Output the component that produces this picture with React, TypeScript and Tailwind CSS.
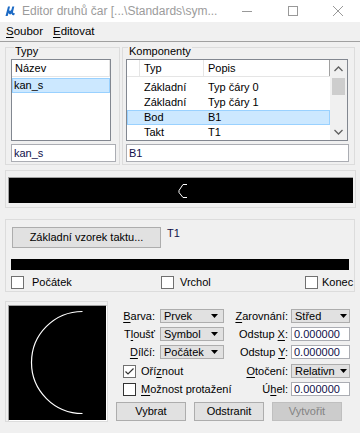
import React from 'react';

const U = ({ children }: { children: React.ReactNode }) => (
  <span className="underline underline-offset-[2px] decoration-1">{children}</span>
);

interface GroupProps {
  label?: string;
  labelClass?: string;
  className?: string;
  children?: React.ReactNode;
}

function GroupBox({ label, labelClass = '', className = '', children }: GroupProps) {
  return (
    <div className={`relative border border-[#dcdcdc] ${className}`}>
      {label && (
        <span className={`absolute -top-[3px] bg-[#f0f0f0] px-[1px] leading-[13px] ${labelClass}`}>
          {label}
        </span>
      )}
      {children}
    </div>
  );
}

function CheckBox({ checked = false, dark = false }: { checked?: boolean; dark?: boolean }) {
  return (
    <span
      className={`w-[13px] h-[13px] shrink-0 bg-white border flex items-center justify-center ${
        dark ? 'border-[#333333]' : 'border-[#707070]'
      }`}
    >
      {checked && (
        <svg width="11" height="11" viewBox="0 0 11 11">
          <path d="M1.5 5.5 L4 8 L9.5 2.5" fill="none" stroke="#333333" strokeWidth="1.2" />
        </svg>
      )}
    </span>
  );
}

const Arrow = () => (
  <svg width="7" height="4" viewBox="0 0 7 4" className="shrink-0">
    <path d="M0 0 H7 L3.5 4 Z" fill="#000" />
  </svg>
);

function Combo({ value, wide }: { value: string; wide?: boolean }) {
  return (
    <div
      className={`h-[14px] border border-[#adadad] bg-[#e1e1e1] flex items-center pl-[3px] leading-[12px] ${
        wide ? 'w-[64px] pr-[5px]' : 'w-[59px] pr-[2px]'
      }`}
    >
      <span className="flex-1 min-w-0 overflow-hidden whitespace-nowrap">{value}</span>
      <span className="ml-[3px] shrink-0">
        <Arrow />
      </span>
    </div>
  );
}

const Field = ({ value }: { value: string }) => (
  <div className="w-[59px] h-[14px] border border-[#abadb3] bg-white pl-[2px] leading-[12px] text-[#10104a]">
    {value}
  </div>
);

function Btn({ children, disabled }: { children: React.ReactNode; disabled?: boolean }) {
  return (
    <div
      className={`w-[70px] h-[19px] border flex items-center justify-center ${
        disabled ? 'bg-[#cccccc] border-[#bfbfbf] text-[#838383]' : 'bg-[#e1e1e1] border-[#adadad]'
      }`}
    >
      {children}
    </div>
  );
}

const components = [
  ['Základní', 'Typ čáry 0'],
  ['Základní', 'Typ čáry 1'],
  ['Bod', 'B1'],
  ['Takt', 'T1'],
];

export default function App() {
  return (
    <div className="w-[360px] h-[433px] overflow-hidden bg-[#f0f0f0] text-black text-[11px] leading-[13px] font-['Liberation_Sans',Arial,sans-serif]">
      {/* title bar */}
      <div className="h-[22px] bg-white flex items-center">
        <svg width="11" height="10" viewBox="0 0 11 10" className="ml-[5px] shrink-0">
          <path
            d="M0.5 10 L3 0.5 L5 0.5 L4.2 4 Q5 6 6.5 3.5 L7.3 0.5 L9.3 0.5 L8 6 Q7.8 7.5 9.8 7 L9.3 9 Q6.8 9.8 6.6 7.6 Q4.6 9.6 3.5 7 L2.7 10 Z"
            fill="#1d6bc5"
          />
        </svg>
        <span className="ml-[6px] text-[12px] text-[#9b9b9b] whitespace-nowrap">
          Editor druhů čar [...\Standards\sym...
        </span>
        <div className="ml-auto flex h-full">
          <div className="w-[46px] flex items-center justify-center">
            <div className="w-[10px] h-[1px] bg-[#999999]" />
          </div>
          <div className="w-[45px] flex items-center justify-center">
            <div className="w-[10px] h-[10px] border border-[#999999]" />
          </div>
          <div className="w-[45px] flex items-center justify-center">
            <svg width="10" height="10" viewBox="0 0 10 10">
              <path d="M0 0 L10 10 M10 0 L0 10" stroke="#999999" strokeWidth="1" />
            </svg>
          </div>
        </div>
      </div>

      {/* menu */}
      <div className="h-[20px] border-b border-[#a0a0a0] flex items-center text-[11.5px]">
        <span className="ml-[6px] w-[47px]">
          <U>S</U>oubor
        </span>
        <span>
          <U>E</U>ditovat
        </span>
      </div>

      {/* lists */}
      <div className="flex mt-[5px] ml-[5px] gap-[2px]">
        <GroupBox label="Typy" labelClass="left-[8px]" className="w-[115px] h-[118px] pt-[11px] pl-[5px]">
          <div className="w-[100px] h-[82px] border border-[#828790] bg-white">
            <div className="h-[17px] border-b border-r border-[#e5e5e5] flex items-center pl-[3px]">Název</div>
            <div className="mt-[1px] h-[15px] w-[98px] bg-[#cce8ff] border border-[#99d1ff] flex items-center pl-[1px]">
              kan_s
            </div>
          </div>
          <div className="mt-[3px] w-[105px] h-[18px] border border-[#abadb3] bg-white flex items-center pl-[2px] text-[#10104a]">
            kan_s
          </div>
        </GroupBox>

        <GroupBox label="Komponenty" labelClass="left-[5px]" className="w-[233px] h-[118px] pt-[11px] pl-[3px]">
          <div className="w-[222px] h-[82px] border border-[#828790] bg-white flex">
            <div className="w-[203px]">
              <div className="h-[17px] border-b border-[#e5e5e5] flex">
                <div className="w-[13px] border-r border-[#e5e5e5]" />
                <div className="w-[64px] border-r border-[#e5e5e5] flex items-center pl-[4px]">Typ</div>
                <div className="w-[126px] border-r border-[#a0a0a0] flex items-center pl-[4px]">Popis</div>
              </div>
              <div className="mt-[3px]">
                {components.map(([typ, popis], i) => (
                  <div
                    key={i}
                    className={`h-[15px] flex items-center border ${
                      i === 2 ? 'bg-[#cce8ff] border-[#99d1ff]' : 'border-transparent'
                    }`}
                  >
                    <span className="ml-[12px] w-[64px] pl-[4px]">{typ}</span>
                    <span className="pl-[4px]">{popis}</span>
                  </div>
                ))}
              </div>
            </div>
            <div className="w-[17px] ml-auto bg-[#f0f0f0] flex flex-col items-center">
              <div className="h-[17px] w-full flex items-center justify-center">
                <svg width="9" height="6" viewBox="0 0 9 6">
                  <path d="M0.5 5 L4.5 1 L8.5 5" fill="none" stroke="#606060" strokeWidth="1.3" />
                </svg>
              </div>
              <div className="mt-[1px] w-[13px] h-[17px] bg-[#cdcdcd]" />
              <div className="mt-auto h-[17px] w-full flex items-center justify-center">
                <svg width="9" height="6" viewBox="0 0 9 6">
                  <path d="M0.5 1 L4.5 5 L8.5 1" fill="none" stroke="#606060" strokeWidth="1.3" />
                </svg>
              </div>
            </div>
          </div>
          <div className="mt-[3px] w-[223px] h-[18px] border border-[#abadb3] bg-white flex items-center pl-[2px] text-[#10104a]">
            B1
          </div>
        </GroupBox>
      </div>

      {/* strip preview */}
      <GroupBox className="mt-[5px] ml-[5px] w-[351px] h-[38px] pt-[6px] px-[2px]">
        <div className="h-[26px] bg-black border-t border-l border-[#a0a0a0]">
          <svg width="344" height="25" viewBox="0 0 344 25" className="block">
            <path d="M178 6.5 H174 L170 12.5 V14.5 L174 19.5 H178" fill="none" stroke="#fff" strokeWidth="1" />
          </svg>
        </div>
      </GroupBox>

      {/* pattern group */}
      <GroupBox className="mt-[11px] ml-[5px] w-[350px] h-[73px] pt-[7px] pl-[5px]">
        <div className="flex items-start">
          <div className="ml-[1px] w-[149px] h-[21px] border border-[#adadad] bg-[#e1e1e1] flex items-center justify-center">
            Základní vzorek taktu...
          </div>
          <span className="ml-[6px] text-[#10104a]">T1</span>
        </div>
        <div className="mt-[11px] w-[338px] h-[11px] bg-black" />
        <div className="mt-[6px] flex items-center h-[13px]">
          <div className="w-[150px] flex items-center">
            <CheckBox />
            <span className="ml-[8px]">Počátek</span>
          </div>
          <div className="w-[144px] flex items-center">
            <CheckBox />
            <span className="ml-[6px]">Vrchol</span>
          </div>
          <div className="flex items-center">
            <CheckBox />
            <span className="ml-[4px]">Konec</span>
          </div>
        </div>
      </GroupBox>

      {/* symbol settings */}
      <div className="mt-[9px] flex">
        <div className="ml-[5px] w-[103px] h-[121px] border border-[#dcdcdc] pt-[3px] pl-[2px]">
          <div className="w-[99px] h-[116px] bg-black border-t border-l border-[#a0a0a0] border-r border-b border-r-white border-b-white">
            <svg width="97" height="114" viewBox="0 0 97 114" className="block">
              <path d="M73.5 5.5 A51 51 0 0 0 73.5 107.5" fill="none" stroke="#fff" strokeWidth="1.2" />
            </svg>
          </div>
        </div>

        <div className="flex flex-col pt-[8px]">
          <div className="flex items-center h-[14px]">
            <div className="w-[116px] flex items-center">
              <span className="w-[47px] text-right">
                <U>B</U>arva:
              </span>
              <span className="ml-[5px]">
                <Combo value="Prvek" wide />
              </span>
            </div>
            <span className="w-[64px] text-right">
              <U>Z</U>arovnání:
            </span>
            <span className="ml-[3px]">
              <Combo value="Střed" />
            </span>
          </div>

          <div className="mt-[4px] flex items-center h-[14px]">
            <div className="w-[116px] flex items-center">
              <span className="w-[47px] text-right">
                T<U>l</U>oušť
              </span>
              <span className="ml-[5px]">
                <Combo value="Symbol" wide />
              </span>
            </div>
            <span className="w-[64px] text-right">
              Odstup <U>X</U>:
            </span>
            <span className="ml-[3px]">
              <Field value="0.000000" />
            </span>
          </div>

          <div className="mt-[4px] flex items-center h-[14px]">
            <div className="w-[116px] flex items-center">
              <span className="w-[47px] text-right">
                <U>D</U>ílčí:
              </span>
              <span className="ml-[5px]">
                <Combo value="Počátek" wide />
              </span>
            </div>
            <span className="w-[64px] text-right">
              Odstup <U>Y</U>:
            </span>
            <span className="ml-[3px]">
              <Field value="0.000000" />
            </span>
          </div>

          <div className="mt-[5px] flex items-center h-[14px]">
            <div className="w-[116px] flex items-center pl-[15px]">
              <CheckBox checked />
              <span className="ml-[5px]">
                Oří<U>z</U>nout
              </span>
            </div>
            <span className="w-[64px] text-right">
              <U>O</U>točení:
            </span>
            <span className="ml-[3px]">
              <Combo value="Relativn" />
            </span>
          </div>

          <div className="mt-[4px] flex items-center h-[14px]">
            <div className="w-[116px] flex items-center pl-[15px]">
              <CheckBox dark />
              <span className="ml-[5px] whitespace-nowrap">
                <U>M</U>ožnost protažení
              </span>
            </div>
            <span className="w-[64px] text-right">
              Ú<U>h</U>el:
            </span>
            <span className="ml-[3px]">
              <Field value="0.000000" />
            </span>
          </div>

          <div className="mt-[6px] ml-[8px] flex gap-[8px]">
            <Btn>Vybrat</Btn>
            <Btn>Odstranit</Btn>
            <Btn disabled>Vytvořit</Btn>
          </div>
        </div>
      </div>
    </div>
  );
}
